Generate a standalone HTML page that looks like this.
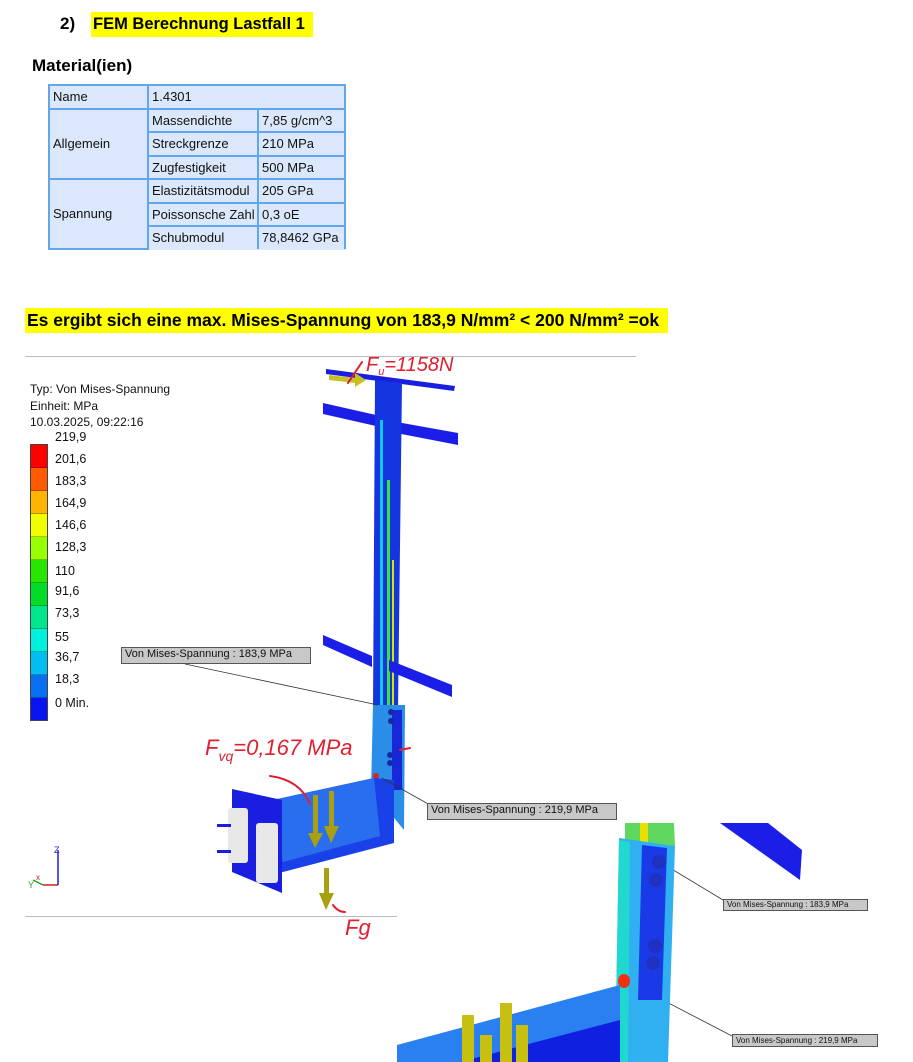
<!DOCTYPE html>
<html><head><meta charset="utf-8"><style>
body{margin:0;width:913px;height:1062px;background:#fff;position:relative;overflow:hidden;font-family:"Liberation Sans",sans-serif;}
.a{position:absolute;white-space:nowrap}
table{position:absolute;left:48px;top:84px;border-collapse:collapse;font-size:13px;color:#111;background:#dbe8fb;table-layout:fixed;width:296px}
td{border:2px solid #62a6ee;padding:0 3px;height:21.5px;white-space:nowrap;overflow:hidden}
.lg{font-size:12px;color:#111;line-height:16.5px}
.bar div{height:22px;width:16px;border-bottom:1px solid rgba(0,0,0,.25)}
.lab{font-size:12.5px;color:#111;position:absolute;left:55px}
.box{position:absolute;background:#c8c8c8;border:1px solid #555;font-size:10px;color:#111;padding:0 3px;box-sizing:border-box}
</style></head><body>
<div class="a" style="left:60px;top:14px;font-size:17px;font-weight:bold">2)</div>
<div class="a" style="left:91px;top:12px;height:25px;width:222px;background:#ffff00;font-size:16.5px;font-weight:bold;line-height:25px;padding-left:2px;box-sizing:border-box">FEM Berechnung Lastfall 1</div>
<div class="a" style="left:32px;top:56px;font-size:17px;font-weight:bold">Material(ien)</div>
<table>
<colgroup><col style="width:99px"><col style="width:110px"><col style="width:87px"></colgroup>
<tr><td>Name</td><td colspan="2">1.4301</td></tr>
<tr><td rowspan="3">Allgemein</td><td>Massendichte</td><td>7,85 g/cm^3</td></tr>
<tr><td>Streckgrenze</td><td>210 MPa</td></tr>
<tr><td>Zugfestigkeit</td><td>500 MPa</td></tr>
<tr><td rowspan="3">Spannung</td><td>Elastizitätsmodul</td><td>205 GPa</td></tr>
<tr><td>Poissonsche Zahl</td><td>0,3 oE</td></tr>
<tr><td style="border-bottom:none">Schubmodul</td><td style="border-bottom:none">78,8462 GPa</td></tr>
</table>
<div class="a" style="left:25px;top:308px;height:25px;width:643px;background:#ffff00;font-size:17.5px;font-weight:bold;line-height:25px;padding-left:2px;box-sizing:border-box">Es ergibt sich eine max. Mises-Spannung von 183,9 N/mm² &lt; 200 N/mm² =ok</div>
<div class="a" style="left:25px;top:356px;width:611px;height:1px;background:#bbb"></div>
<div class="a lg" style="left:30px;top:381px">Typ: Von Mises-Spannung<br>Einheit: MPa<br>10.03.2025, 09:22:16</div>
<div class="a bar" style="left:30px;top:444px;border:1px solid #444">
<div style="background:#ff0000"></div><div style="background:#ff5a00"></div><div style="background:#ffb400"></div><div style="background:#f0ff00"></div><div style="background:#96ff00"></div><div style="background:#28e600"></div><div style="background:#00dc28"></div><div style="background:#00e68c"></div><div style="background:#00f0dc"></div><div style="background:#00bef0"></div><div style="background:#0a6ef0"></div><div style="background:#0a14f0;border:none"></div></div>
<div class="lab" style="top:430px">219,9</div><div class="lab" style="top:452px">201,6</div><div class="lab" style="top:474px">183,3</div><div class="lab" style="top:496px">164,9</div><div class="lab" style="top:518px">146,6</div><div class="lab" style="top:540px">128,3</div><div class="lab" style="top:564px">110</div><div class="lab" style="top:584px">91,6</div><div class="lab" style="top:606px">73,3</div><div class="lab" style="top:630px">55</div><div class="lab" style="top:650px">36,7</div><div class="lab" style="top:672px">18,3</div><div class="lab" style="top:696px">0 Min.</div>
<div class="a" style="left:25px;top:916px;width:372px;height:1px;background:#bbb"></div>
<svg class="a" style="left:0;top:0" width="913" height="1062">
<polygon points="326,369 455,386 454,391 326,374" fill="#1a1ee0"/>
<polygon points="323,403 376,415 376,426 323,414" fill="#1a1ee6"/>
<polygon points="391,421 458,433 458,445 391,432" fill="#1a1ee6"/>
<polygon points="375,380 402,383 398,710 373,708" fill="#1535e0"/>
<rect x="380" y="420" width="3" height="290" fill="#10c8e0"/>
<rect x="387" y="480" width="3" height="230" fill="#40e040"/>
<rect x="392" y="560" width="2" height="150" fill="#d0e800"/>
<polygon points="323,635 372,656 372,667 323,645" fill="#1a1ee6"/>
<polygon points="389,660 452,685 452,697 389,671" fill="#1a1ee6"/>
<polygon points="329,375 355,378 355,373 366,380 355,387 355,383 329,380" fill="#c8c020"/>
<polygon points="373,705 405,705 404,830 371,790" fill="#2a8ee8"/>
<rect x="392" y="710" width="10" height="80" fill="#1828d8"/>
<circle cx="391" cy="712" r="3" fill="#1828a0"/><circle cx="391" cy="721" r="3" fill="#1828a0"/>
<circle cx="390" cy="755" r="3" fill="#1828a0"/><circle cx="390" cy="763" r="3" fill="#1828a0"/>
<circle cx="376" cy="776" r="3" fill="#e02020"/>
<polygon points="268,801 374,778 394,780 394,843 283,872 268,870" fill="#1a40e8"/>
<polygon points="268,801 374,778 380,836 283,862" fill="#2a6ef0"/>
<polygon points="232,789 282,800 282,893 232,872" fill="#1a1ee0"/>
<rect x="228" y="808" width="20" height="55" rx="3" fill="#e8e8e8"/>
<rect x="256" y="823" width="22" height="60" rx="3" fill="#e8e8e8"/>
<rect x="217" y="824" width="14" height="3" fill="#1a1ee0"/><rect x="217" y="850" width="14" height="3" fill="#1a1ee0"/>
<rect x="313" y="795" width="5" height="45" fill="#a8a010"/><polygon points="308,833 323,833 315,848" fill="#a8a010"/>
<rect x="329" y="791" width="5" height="40" fill="#a8a010"/><polygon points="324,826 339,826 331,843" fill="#a8a010"/>
<rect x="324" y="868" width="5" height="30" fill="#a8a010"/><polygon points="319,893 334,893 326,910" fill="#a8a010"/>
<line x1="185" y1="664" x2="378" y2="705" stroke="#333" stroke-width="0.8"/>
<line x1="382" y1="778" x2="430" y2="805" stroke="#333" stroke-width="0.8"/>
<line x1="660" y1="862" x2="723" y2="900" stroke="#333" stroke-width="0.8"/>
<line x1="630" y1="983" x2="732" y2="1036" stroke="#333" stroke-width="0.8"/>
<polygon points="625,823 674,823 675,846 625,846" fill="#60d860"/>
<rect x="640" y="823" width="8" height="23" fill="#e8e000"/>
<polygon points="619,838 675,846 668,1062 615,1062" fill="#30b0f0"/>
<polygon points="642,845 667,848 662,1000 638,1000" fill="#1a3ae8"/>
<polygon points="619,840 630,842 628,1062 615,1062" fill="#20d8d0"/>
<circle cx="659" cy="862" r="7" fill="#2030c0"/><circle cx="656" cy="880" r="7" fill="#2030c0"/>
<circle cx="655" cy="946" r="7" fill="#2030c0"/><circle cx="653" cy="963" r="7" fill="#2030c0"/>
<ellipse cx="624" cy="981" rx="6" ry="7" fill="#f03010"/>
<polygon points="397,1045 620,985 620,1062 397,1062" fill="#2a80f0"/>
<polygon points="460,1062 620,1020 620,1062" fill="#1020e0"/>
<rect x="462" y="1015" width="12" height="47" fill="#c8c010"/><rect x="500" y="1003" width="12" height="59" fill="#c8c010"/>
<rect x="480" y="1035" width="12" height="27" fill="#c8c010"/><rect x="516" y="1025" width="12" height="37" fill="#c8c010"/>
<polygon points="720,823 768,823 802,850 800,880" fill="#1a1ee6"/>
<g fill="none" stroke="#e02030" stroke-width="2" stroke-linecap="round">
<line x1="348" y1="383" x2="362" y2="362"/>
<path d="M270 776 Q300 780 310 804"/>
<path d="M400 750 L410 748"/>
<path d="M333 905 Q338 912 345 912"/>
</g>
<text x="366" y="371" font-family="Liberation Sans,sans-serif" font-style="italic" font-size="20" fill="#e02030">F<tspan font-size="11" dy="4">u</tspan><tspan dy="-4">=1158N</tspan></text>
<text x="205" y="755" font-family="Liberation Sans,sans-serif" font-style="italic" font-size="22" fill="#e02030">F<tspan font-size="14" dy="6">vq</tspan><tspan dy="-6">=0,167 MPa</tspan></text>
<text x="345" y="935" font-family="Liberation Sans,sans-serif" font-style="italic" font-size="22" fill="#e02030">Fg</text>
<line x1="43" y1="885" x2="58" y2="885" stroke="#d02020" stroke-width="1.5"/>
<line x1="58" y1="885" x2="58" y2="850" stroke="#2020d0" stroke-width="1.5"/>
<line x1="43" y1="885" x2="33" y2="880" stroke="#20a020" stroke-width="1.5"/>
<text x="54" y="853" font-size="9" fill="#2020d0">Z</text><text x="36" y="880" font-size="8" fill="#d02020">x</text><text x="28" y="888" font-size="9" fill="#20a020">Y</text>
</svg>
<div class="box" style="left:121px;top:647px;width:190px;height:17px;font-size:11px">Von Mises-Spannung : 183,9 MPa</div>
<div class="box" style="left:427px;top:803px;width:190px;height:17px;font-size:11px">Von Mises-Spannung : 219,9 MPa</div>
<div class="box" style="left:723px;top:899px;width:145px;height:12px;font-size:8px;line-height:10px">Von Mises-Spannung : 183,9 MPa</div>
<div class="box" style="left:732px;top:1034px;width:146px;height:13px;font-size:8px;line-height:11px">Von Mises-Spannung : 219,9 MPa</div>
</body></html>
